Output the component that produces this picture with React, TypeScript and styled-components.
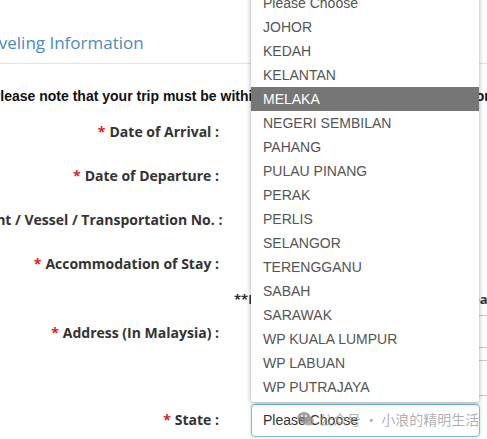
import React from "react";
import styled, { createGlobalStyle } from "styled-components";

const Global = createGlobalStyle`
  html, body { margin: 0; padding: 0; background: #fff; }
  body { width: 487px; height: 439px; overflow: hidden; }
`;

const Viewport = styled.div`
  position: relative;
  width: 487px;
  height: 439px;
  overflow: hidden;
  background: #fff;
`;

const Panel = styled.div`
  margin-left: -28px;
  width: 640px;
`;

const PanelHeader = styled.h4`
  margin: 0;
  height: 64px;
  box-sizing: border-box;
  padding-top: 31px;
  padding-left: 1px;
  border-bottom: 1px solid #e2e2e2;
  font-family: "Open Sans", sans-serif;
  font-weight: 400;
  font-size: 17px;
  line-height: 24px;
  color: #4a8bc0;
`;

const Notice = styled.p`
  margin: 22px 0 4px;
  padding-left: 19px;
  font-family: "Liberation Sans", Arial, sans-serif;
  font-weight: 700;
  font-size: 14px;
  line-height: 20px;
  color: #111;
  white-space: nowrap;
`;

const FormRow = styled.div<{ $h?: number; $top?: boolean }>`
  display: grid;
  grid-template-columns: 247px 1fr;
  column-gap: 32px;
  align-items: ${(p) => (p.$top ? "start" : "center")};
  height: ${(p) => p.$h ?? 44}px;
`;

const Label = styled.label<{ $pt?: number }>`
  text-align: right;
  padding-top: ${(p) => p.$pt ?? 0}px;
  font-family: "Open Sans", sans-serif;
  font-weight: 700;
  font-size: 14px;
  line-height: 20px;
  color: #333;
  white-space: nowrap;
`;

const Req = styled.span`
  color: #e0201d;
  margin-right: 4px;
`;

const Input = styled.div<{ $w?: number; $h?: number }>`
  box-sizing: border-box;
  width: ${(p) => p.$w ?? 228}px;
  height: ${(p) => p.$h ?? 34}px;
  border: 1px solid #ccc;
  border-radius: 3px;
  background: #fff;
`;

const Stack = styled.div`
  display: flex;
  flex-direction: column;
  gap: 12px;
  padding-top: 3px;
`;

const NoteLine = styled.div`
  height: 26px;
  padding-left: 262px;
  font-family: "Open Sans", sans-serif;
  font-weight: 700;
  font-size: 13px;
  line-height: 26px;
  color: #333;
  white-space: nowrap;
`;

const Select = styled.div`
  box-sizing: border-box;
  width: 229px;
  height: 33px;
  border: 1px solid #7bbfc9;
  border-radius: 4px;
  box-shadow: 0 0 3px rgba(102, 175, 200, 0.5);
  padding: 0 11px;
  display: flex;
  align-items: center;
  font-family: "Liberation Sans", Arial, sans-serif;
  font-size: 14px;
  color: #333;
`;

const Dropdown = styled.ul`
  position: absolute;
  left: 251px;
  top: -9px;
  width: 228px;
  margin: 0;
  padding: 0 0 3px;
  list-style: none;
  background: #fff;
  box-shadow: 0 1px 5px rgba(0, 0, 0, 0.35);
  border-radius: 0 0 3px 3px;
`;

const Option = styled.li<{ $active?: boolean }>`
  height: 24px;
  padding-left: 12px;
  display: flex;
  align-items: center;
  font-family: "Liberation Sans", Arial, sans-serif;
  font-size: 14px;
  color: ${(p) => (p.$active ? "#fff" : "#555")};
  background: ${(p) => (p.$active ? "#767676" : "transparent")};
`;

const Watermark = styled.div`
  position: absolute;
  left: 297px;
  top: 409px;
  display: flex;
  align-items: center;
  gap: 4px;
  font-family: "Noto Sans CJK SC", sans-serif;
  font-size: 14px;
  line-height: 20px;
  color: rgba(150, 150, 150, 0.75);
  pointer-events: none;
  white-space: nowrap;
`;

const states = [
  "Please Choose",
  "JOHOR",
  "KEDAH",
  "KELANTAN",
  "MELAKA",
  "NEGERI SEMBILAN",
  "PAHANG",
  "PULAU PINANG",
  "PERAK",
  "PERLIS",
  "SELANGOR",
  "TERENGGANU",
  "SABAH",
  "SARAWAK",
  "WP KUALA LUMPUR",
  "WP LABUAN",
  "WP PUTRAJAYA",
];

const WeChatIcon = () => (
  <svg width="18" height="16" viewBox="0 0 18 16">
    <ellipse cx="7" cy="6.5" rx="6.5" ry="5.5" fill="rgba(120,120,120,0.7)" />
    <ellipse cx="11.5" cy="10" rx="5.5" ry="4.6" fill="rgba(150,150,150,0.75)" />
    <circle cx="5" cy="5" r="0.9" fill="#fff" />
    <circle cx="9" cy="5" r="0.9" fill="#fff" />
  </svg>
);

export default function App() {
  return (
    <Viewport>
      <Global />
      <Panel>
        <PanelHeader>Traveling Information</PanelHeader>
        <Notice>
          Please note that your trip must be within 30 days from the date of arrival or
          departure.
        </Notice>
        <FormRow>
          <Label>
            <Req>*</Req>Date of Arrival :
          </Label>
          <Input />
        </FormRow>
        <FormRow>
          <Label>
            <Req>*</Req>Date of Departure :
          </Label>
          <Input />
        </FormRow>
        <FormRow>
          <Label>Flight / Vessel / Transportation No. :</Label>
          <Input />
        </FormRow>
        <FormRow>
          <Label>
            <Req>*</Req>Accommodation of Stay :
          </Label>
          <Input />
        </FormRow>
        <NoteLine>**If you stay more than one place, please declare the first.</NoteLine>
        <FormRow $h={91} $top>
          <Label $pt={11}>
            <Req>*</Req>Address (In Malaysia) :
          </Label>
          <Stack>
            <Input $w={260} $h={33} />
            <Input $w={260} $h={36} />
          </Stack>
        </FormRow>
        <FormRow $h={34}>
          <Label>
            <Req>*</Req>State :
          </Label>
          <Select>Please Choose</Select>
        </FormRow>
      </Panel>
      <Dropdown>
        {states.map((s) => (
          <Option key={s} $active={s === "MELAKA"}>
            {s}
          </Option>
        ))}
      </Dropdown>
      <Watermark>
        <WeChatIcon />
        <span>公众号 · 小浪的精明生活</span>
      </Watermark>
    </Viewport>
  );
}
